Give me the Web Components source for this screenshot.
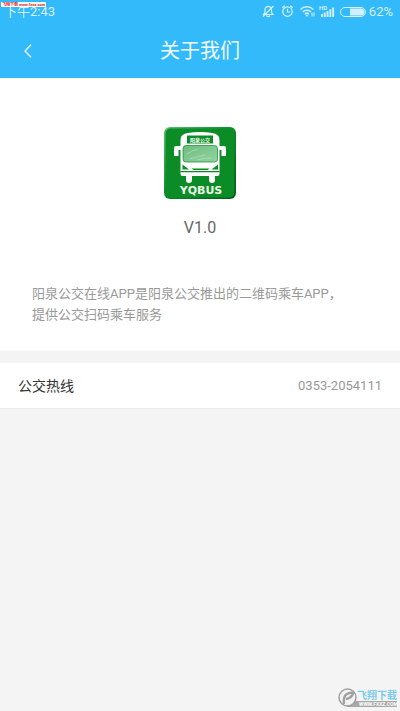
<!DOCTYPE html>
<html lang="zh-CN">
<head>
<meta charset="utf-8">
<meta name="viewport" content="width=device-width, initial-scale=1">
<title>关于我们</title>
<style>
  html, body { margin: 0; background: #f4f4f4; }
  body { font-family: Roboto, "Noto Sans CJK SC", sans-serif; }
</style>
</head>
<body>
<about-page></about-page>

<script>
const define = (name, html) => {
  const template = document.createElement('template');
  template.innerHTML = html;
  customElements.define(name, class extends HTMLElement {
    constructor() {
      super();
      this.attachShadow({ mode: 'open' }).append(template.content.cloneNode(true));
    }
  });
};

define('status-bar', `
  <style>
    :host { display: flex; align-items: center; justify-content: space-between; height: 24px; padding: 0 7px 0 4px; color: #d3f0ff; font-size: 13px; line-height: 24px; }
    .icons { display: flex; align-items: center; }
    svg { display: block; fill: none; stroke: currentColor; }
    .level { margin-left: 3px; }
  </style>
  <slot></slot>
  <div class="icons">
    <svg width="108" height="20" viewBox="0 0 108 20" aria-hidden="true">
      <g stroke-width="1.2">
        <path d="M5.500 12.500h9.500l-1.500-2V7.800A3.500 3.500 0 0 0 10.300 4.300 3.500 3.500 0 0 0 7 7.800v2.700zM8.500 13.500a1.800 1.800 0 0 0 3.400 0M15.500 4L5 14.500"/>
        <circle cx="29.500" cy="9.600" r="4.700"/><path d="M29.500 6.800v3.200h2.400M24.300 5.800l2.400-2M34.700 5.800l-2.400-2"/>
      </g>
      <g transform="translate(4 0)">
        <path stroke-width="1.500" d="M38.500 7.500a9 9 0 0 1 12.800 0M40.800 9.900a5.800 5.800 0 0 1 8.200 0M43 12.100a2.700 2.700 0 0 1 3.800 0"/>
        <path d="M50 10.500v4M52 10.500v4" stroke-width="1"/>
        <path d="M43.500 13h2.800L44.900 15z" fill="currentColor" stroke="none"/>
      </g>
      <g transform="translate(3 0)" fill="currentColor" stroke="none">
        <path d="M60 12h1.900v3H60zM62.800 10.500h1.900V15h-1.900zM65.600 9h1.900v6h-1.900zM68.400 7.300h1.900V15h-1.900zM71.200 5.500h1.900V15h-1.900z"/>
        <text x="58" y="8" font-size="6" font-weight="700">HD</text>
      </g>
      <rect x="82.500" y="5.500" width="25" height="9" rx="4.500"/>
      <path d="M92 6.500h11a3.500 3.500 0 0 1 0 7H92z" fill="currentColor" stroke="none"/>
    </svg>
    <span class="level">62%</span>
  </div>
`);

define('title-bar', `
  <style>
    :host { display: grid; grid-template-columns: 56px 1fr 56px; align-items: center; height: 54px; color: #f4fcff; }
    button { display: flex; align-items: center; height: 44px; padding: 0 0 0 24px; border: 0; background: none; color: inherit; }
    h1 { margin: 0; text-align: center; font-size: 20px; font-weight: 400; line-height: 28px; }
    svg { fill: none; stroke: currentColor; stroke-width: 1.3; }
  </style>
  <button type="button" aria-label="返回"><svg width="8" height="14" viewBox="0 0 8 14"><path d="M7 .7L1 7l6 6.3"/></svg></button>
  <h1><slot></slot></h1>
`);

define('bus-logo', `
  <style>:host { display: block; width: 74px; height: 74px; } svg { display: block; }</style>
  <svg width="74" height="74" viewBox="0 0 74 74" role="img" aria-label="阳泉公交 YQBUS">
    <defs>
      <linearGradient id="edge" x1="0" y1="0" x2="1" y2="1"><stop offset="0" stop-color="#5fc074"/><stop offset=".5" stop-color="#0a8a2a"/><stop offset="1" stop-color="#04591a"/></linearGradient>
      <linearGradient id="glass" x1="0" y1="0" x2="1" y2="1"><stop offset="0" stop-color="#6cbd7f"/><stop offset="1" stop-color="#94d3a2"/></linearGradient>
    </defs>
    <rect x="1" y="1" width="72" height="72" rx="6" fill="url(#edge)"/>
    <rect x="2.600" y="2.600" width="68.800" height="68.800" rx="5" fill="#0b8c27"/>
    <g fill="#fff">
      <path d="M17.500 48V15c0-5 2-7 7-8q12.500-1.800 25 0c5 1 7 3 7 8v33q0 2-2 2h-35q-2 0-2-2z"/>
      <path d="M23 49h6v5q0 3-3 3t-3-3zM46 49h6v5q0 3-3 3t-3-3z"/>
      <path d="M18 20h-5q-2 0-2 2v8h4.500v-6H18zM56 20h5q2 0 2 2v8h-4.500v-6H56z"/>
    </g>
    <rect x="24" y="9.500" width="26" height="8" fill="#0b8c27"/>
    <rect x="20" y="19.500" width="34.500" height="16.500" rx="3" fill="url(#glass)" stroke="#0b8c27" stroke-width=".7"/>
    <path d="M24 28q6-4 11-5M27 33q8-3 15-4M34 34q7-2 14-2" fill="none" stroke="#b3dfbb" stroke-width=".7"/>
    <path d="M19.500 38.500l6.500 5h-6.500zM55 38.500l-6.500 5H55zM28.500 42.500h18l-2 1.500h-14zM17.500 45h39v1.300h-39z" fill="#0b8c27"/>
    <text x="37" y="15.500" text-anchor="middle" font-size="5" font-weight="700" fill="#fff">阳泉公交</text>
    <text x="38" y="68" text-anchor="middle" font-family="DejaVu Sans, sans-serif" font-size="11" font-weight="700" fill="#eefbe8">YQBUS</text>
  </svg>
`);

define('app-intro', `
  <style>
    :host { display: flex; flex-direction: column; align-items: center; padding: 48px 32px 26px; background: #fff; }
    .version { margin: 16px 0 43px; color: #666; font-size: 16px; line-height: 24px; }
    .text { align-self: stretch; margin: 0; color: #999; font-size: 13px; line-height: 21px; }
  </style>
  <bus-logo></bus-logo>
  <p class="version"><slot name="version"></slot></p>
  <p class="text"><slot></slot></p>
`);

define('info-row', `
  <style>
    :host { display: flex; align-items: center; justify-content: space-between; height: 45px; padding: 0 18px; background: #fff; border-bottom: 1px solid #ececec; color: #333; font-size: 14px; line-height: 20px; }
    .value { color: #999; font-size: 13px; }
  </style>
  <span><slot></slot></span><span class="value"><slot name="value"></slot></span>
`);

define('source-tag', `
  <style>
    :host { position: absolute; left: 1px; top: 2px; padding: 0 1px; background: #fff; color: #d22; font-size: 4px; font-weight: 700; line-height: 5px; white-space: nowrap; }
  </style>
  <slot></slot>
`);

define('site-mark', `
  <style>
    :host { position: absolute; right: 2px; bottom: 3px; display: block; }
    svg { display: block; }
  </style>
  <svg width="60" height="20" viewBox="0 0 60 20" role="img" aria-label="飞翔下载">
    <rect x="9" y="13" width="50" height="6" fill="#a8a8a8"/>
    <circle cx="9.500" cy="9.500" r="8.500" fill="#f3f3f3" stroke="#a0a0a0" stroke-width="1.500"/>
    <path d="M6 16q-1-8 3-10 3-2 6-1-1 5-7 6" fill="none" stroke="#a0a0a0" stroke-width="2.500"/>
    <text x="19" y="11" font-size="10" font-weight="700" fill="#7ccbea">飞翔下载</text>
    <text x="21" y="18" font-size="5" font-weight="700" fill="#fff">WWW.FXXZ.COM</text>
  </svg>
`);

define('about-page', `
  <style>
    :host { position: relative; display: flex; flex-direction: column; min-height: 100vh; background: #f4f4f4; }
    header { background: #33bafb; }
    info-row { margin-top: 12px; }
  </style>
  <header><status-bar>下午2:43</status-bar><title-bar>关于我们</title-bar></header>
  <main>
    <app-intro><span slot="version">V1.0</span>阳泉公交在线APP是阳泉公交推出的二维码乘车APP，<br>提供公交扫码乘车服务</app-intro>
    <info-row>公交热线<span slot="value">0353-2054111</span></info-row>
  </main>
  <source-tag>飞翔下载 www.fxxz.com</source-tag>
  <site-mark></site-mark>
`);
</script>
</body>
</html>
